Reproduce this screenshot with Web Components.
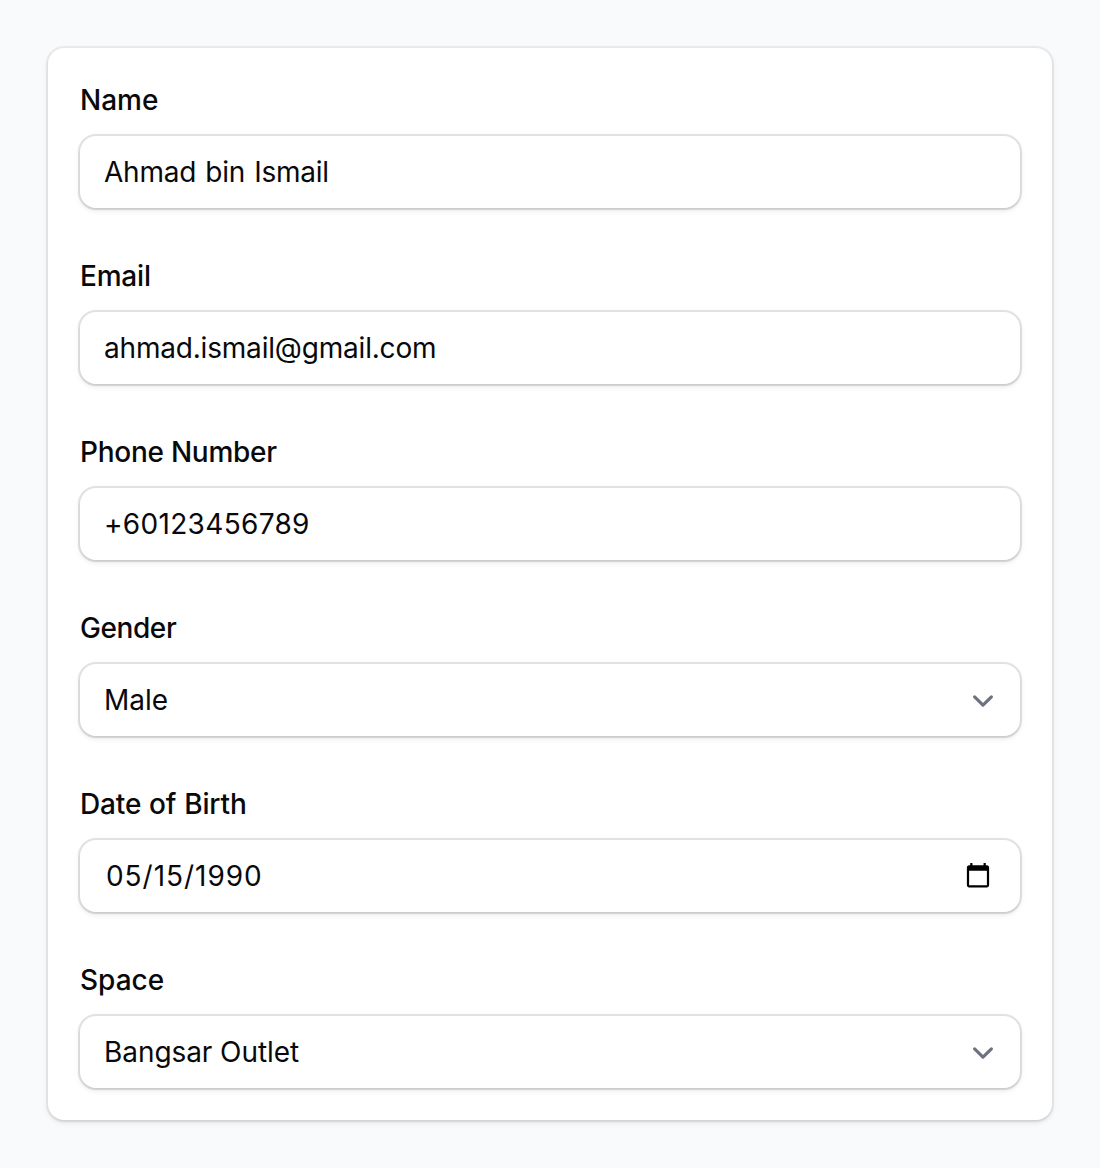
<!DOCTYPE html>
<html lang="en"><head><meta charset="utf-8"><title>Profile</title>
<style>
body{margin:0;min-height:1168px;box-sizing:border-box;padding:48px;background:#f9fafb;color:#09090b;font-family:Inter,"Liberation Sans",sans-serif;font-size:28px;line-height:40px}
</style></head><body>
<form-card>
<form-field label="Name" style="--value-spacing:-.23px;--value-words:1.5px">Ahmad bin Ismail</form-field>
<form-field label="Email" style="--label-spacing:-.2px;--value-spacing:-.19px">ahmad.ismail@gmail.com</form-field>
<form-field label="Phone Number" style="--label-spacing:-.26px;--value-spacing:.32px">+60123456789</form-field>
<form-field label="Gender" icon="chevron" style="--label-spacing:-.42px">Male</form-field>
<form-field label="Date of Birth" icon="calendar" style="--label-spacing:-.14px;--label-words:.5px;--value-spacing:.96px">05/15/1990</form-field>
<form-field label="Space" icon="chevron" style="--value-spacing:-.07px">Bangsar Outlet</form-field>
</form-card>
<script>
class FormCard extends HTMLElement{
constructor(){super();this.attachShadow({mode:'open'}).innerHTML=`<style>
:host{display:flex;flex-direction:column;gap:48px;box-sizing:border-box;height:1072px;padding:32px;background:#fff;border-radius:16px;box-shadow:0 0 0 2px rgba(9,9,11,.05),0 2px 6px rgba(0,0,0,.1),0 2px 4px -2px rgba(0,0,0,.1)}
</style><slot></slot>`}
}
class FieldIcon extends HTMLElement{
constructor(){super();this.attachShadow({mode:'open'})}
connectedCallback(){
const c=this.getAttribute('name')==='calendar';
this.shadowRoot.innerHTML=`<style>:host{display:flex}svg{display:block}</style>`+(c?
`<svg width="26" height="26" viewBox="0.3 0.1 23.4 23.4"><path d="M20 3h-1V1h-2v2H7V1H5v2H4c-1.100 0-2 .9-2 2v16c0 1.100.9 2 2 2h16c1.100 0 2-.9 2-2V5c0-1.100-.9-2-2-2zm0 18H4V8h16v13z"/></svg>`:
`<svg width="42" height="42" viewBox="0 0 20 20"><path d="M6 8l4 4 4-4" fill="none" stroke="#6b7280" stroke-width="1.5" stroke-linecap="round" stroke-linejoin="round"/></svg>`)}
}
class FormField extends HTMLElement{
constructor(){super();this.attachShadow({mode:'open'})}
connectedCallback(){
const i=this.getAttribute('icon');
this.shadowRoot.innerHTML=`<style>
:host{display:flex;flex-direction:column;gap:16px}
.label{font-weight:500;height:40px;letter-spacing:var(--label-spacing,normal);word-spacing:var(--label-words,normal)}
.box{display:flex;align-items:center;justify-content:space-between;box-sizing:border-box;height:72px;padding:0 24px;border-radius:16px;background:#fff;box-shadow:0 0 0 2px rgba(9,9,11,.1),0 2px 6px rgba(0,0,0,.1),0 2px 4px -2px rgba(0,0,0,.1)}
.value{letter-spacing:var(--value-spacing,normal);word-spacing:var(--value-words,normal)}
.calendar .value{padding-left:2px;font-kerning:none;font-feature-settings:"calt" 0}
.calendar field-icon{margin:0 5px 2px 0}
.chevron field-icon{margin:1px -8px 0 0}
</style><div class="label">${this.getAttribute('label')}</div><div class="box ${i||''}"><span class="value"><slot></slot></span>${i?`<field-icon name="${i}"></field-icon>`:''}</div>`}
}
customElements.define('form-card',FormCard);
customElements.define('field-icon',FieldIcon);
customElements.define('form-field',FormField);
</script></body></html>
